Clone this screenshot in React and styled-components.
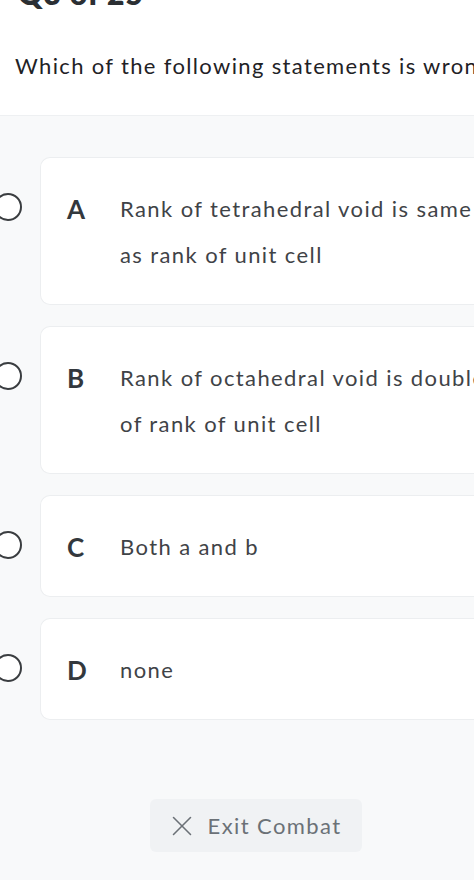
import styled, { createGlobalStyle } from "styled-components";
import { X } from "lucide-react";

const GlobalStyle = createGlobalStyle`
  html, body {
    margin: 0;
    padding: 0;
    background: #f8f9fa;
    overflow: hidden;
  }
  body {
    font-family: Lato, "Noto Sans", sans-serif;
  }
`;

const Page = styled.div`
  width: 512px;
  min-height: 880px;
  display: flex;
  flex-direction: column;
`;

const Header = styled.div`
  background: #ffffff;
  height: 116px;
  border-bottom: 1px solid #eef0f2;
  padding: 0 0 0 15px;
  box-sizing: border-box;
`;

const Counter = styled.h2`
  margin: -25px 0 0 3px;
  font-size: 30px;
  line-height: 36px;
  font-weight: 800;
  letter-spacing: 1px;
  color: #2b2f33;
`;

const Question = styled.p`
  margin: 40px 0 0;
  font-size: 22px;
  line-height: 30px;
  letter-spacing: 1.35px;
  color: #1f2226;
  white-space: nowrap;
`;

const Body = styled.div`
  background: #f8f9fa;
  padding: 41px 0 0;
  display: flex;
  flex-direction: column;
  align-items: center;
`;

const Options = styled.div`
  align-self: stretch;
  display: flex;
  flex-direction: column;
  gap: 21px;
  margin-left: -6px;
`;

const OptionRow = styled.div`
  display: flex;
  align-items: flex-start;
  gap: 18px;
`;

const Radio = styled.span`
  flex: none;
  width: 28px;
  height: 28px;
  margin-top: 36px;
  border: 2px solid #3a3d40;
  border-radius: 50%;
  box-sizing: border-box;
  background: #fff;
`;

const Card = styled.div`
  flex: 1;
  display: flex;
  align-items: flex-start;
  background: #ffffff;
  border: 1px solid #eceef0;
  border-right: none;
  border-radius: 10px 0 0 10px;
  padding: 28px 0 26px 26px;
`;

const Letter = styled.span`
  flex: none;
  width: 53px;
  font-size: 26px;
  line-height: 46px;
  font-weight: 700;
  color: #33383d;
`;

const OptionText = styled.span`
  width: 378px;
  font-size: 22px;
  line-height: 46px;
  letter-spacing: 1.4px;
  color: #3f4347;
`;

const ExitButton = styled.button`
  margin-top: 79px;
  display: flex;
  align-items: center;
  gap: 9px;
  height: 53px;
  padding: 0 21px 0 15px;
  border: none;
  border-radius: 6px;
  background: #f0f2f4;
  color: #6b7177;
  font-family: Lato, "Noto Sans", sans-serif;
  font-size: 22px;
  letter-spacing: 1.4px;
`;

const options = [
  { key: "A", text: "Rank of tetrahedral void is same as rank of unit cell" },
  { key: "B", text: "Rank of octahedral void is double of rank of unit cell" },
  { key: "C", text: "Both a and b" },
  { key: "D", text: "none" },
];

export default function App() {
  return (
    <Page>
      <GlobalStyle />
      <Header>
        <Counter>Q3 of 25</Counter>
        <Question>Which of the following statements is wrong?</Question>
      </Header>
      <Body>
        <Options>
          {options.map((o) => (
            <OptionRow key={o.key}>
              <Radio />
              <Card>
                <Letter>{o.key}</Letter>
                <OptionText>{o.text}</OptionText>
              </Card>
            </OptionRow>
          ))}
        </Options>
        <ExitButton>
          <X size={34} strokeWidth={1.1} />
          Exit Combat
        </ExitButton>
      </Body>
    </Page>
  );
}
